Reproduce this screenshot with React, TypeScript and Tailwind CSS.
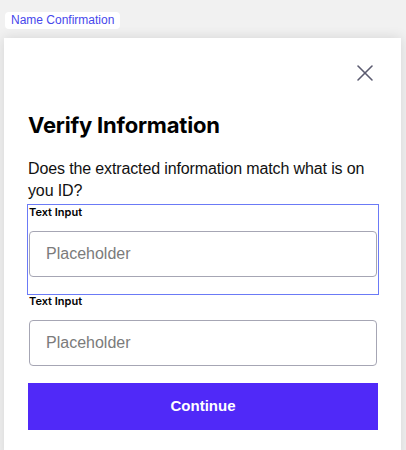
import { X } from "lucide-react";

function Field({ highlighted }: { highlighted?: boolean }) {
  return (
    <div className={highlighted ? "pb-[17px] outline outline-1 outline-[#6b7af6]" : "pb-[17px]"}>
      <div className="text-[11px] leading-[14px] font-semibold text-black font-['Inter',sans-serif] pl-px">
        Text Input
      </div>
      <input
        type="text"
        placeholder="Placeholder"
        className="mt-[12px] mx-px block h-[46px] w-[348px] rounded-[4px] border border-[#a6a6b4] bg-white px-4 text-[16px] font-['Liberation_Sans',sans-serif] text-black placeholder:text-[#7b7b7b] outline-none"
      />
    </div>
  );
}

export default function App() {
  return (
    <div className="h-[450px] w-[406px] overflow-hidden bg-[#f1f1f1] font-['Liberation_Sans',sans-serif]">
      <div className="flex px-[5px] pt-[12px]">
        <span className="block rounded-[4px] bg-white px-[6px] py-[1px] text-[12px] leading-[15px] text-[#4747ec]">
          Name Confirmation
        </span>
      </div>
      <div className="ml-[4px] mt-[9px] h-[420px] w-[397px] bg-white px-[24px] pt-[21px] shadow-[0_0_12px_rgba(0,0,0,0.12)]">
        <div className="flex justify-end -mr-[2px]">
          <X className="h-[28px] w-[28px] text-[#5b5b70]" strokeWidth={1.3} />
        </div>
        <h1 className="mt-[24px] text-[22px] leading-[28px] font-bold text-black font-['Inter',sans-serif] tracking-[-0.2px]">
          Verify Information
        </h1>
        <p className="mt-[19px] text-[16px] leading-[22px] tracking-[-0.13px] text-[#111]">
          Does the extracted information match what is on you ID?
        </p>
        <div className="mt-[3px] w-[350px]">
          <Field highlighted />
          <Field />
          <button className="block h-[47px] w-[350px] bg-[#5029f8] text-[15px] font-bold text-white">
            Continue
          </button>
        </div>
      </div>
    </div>
  );
}
